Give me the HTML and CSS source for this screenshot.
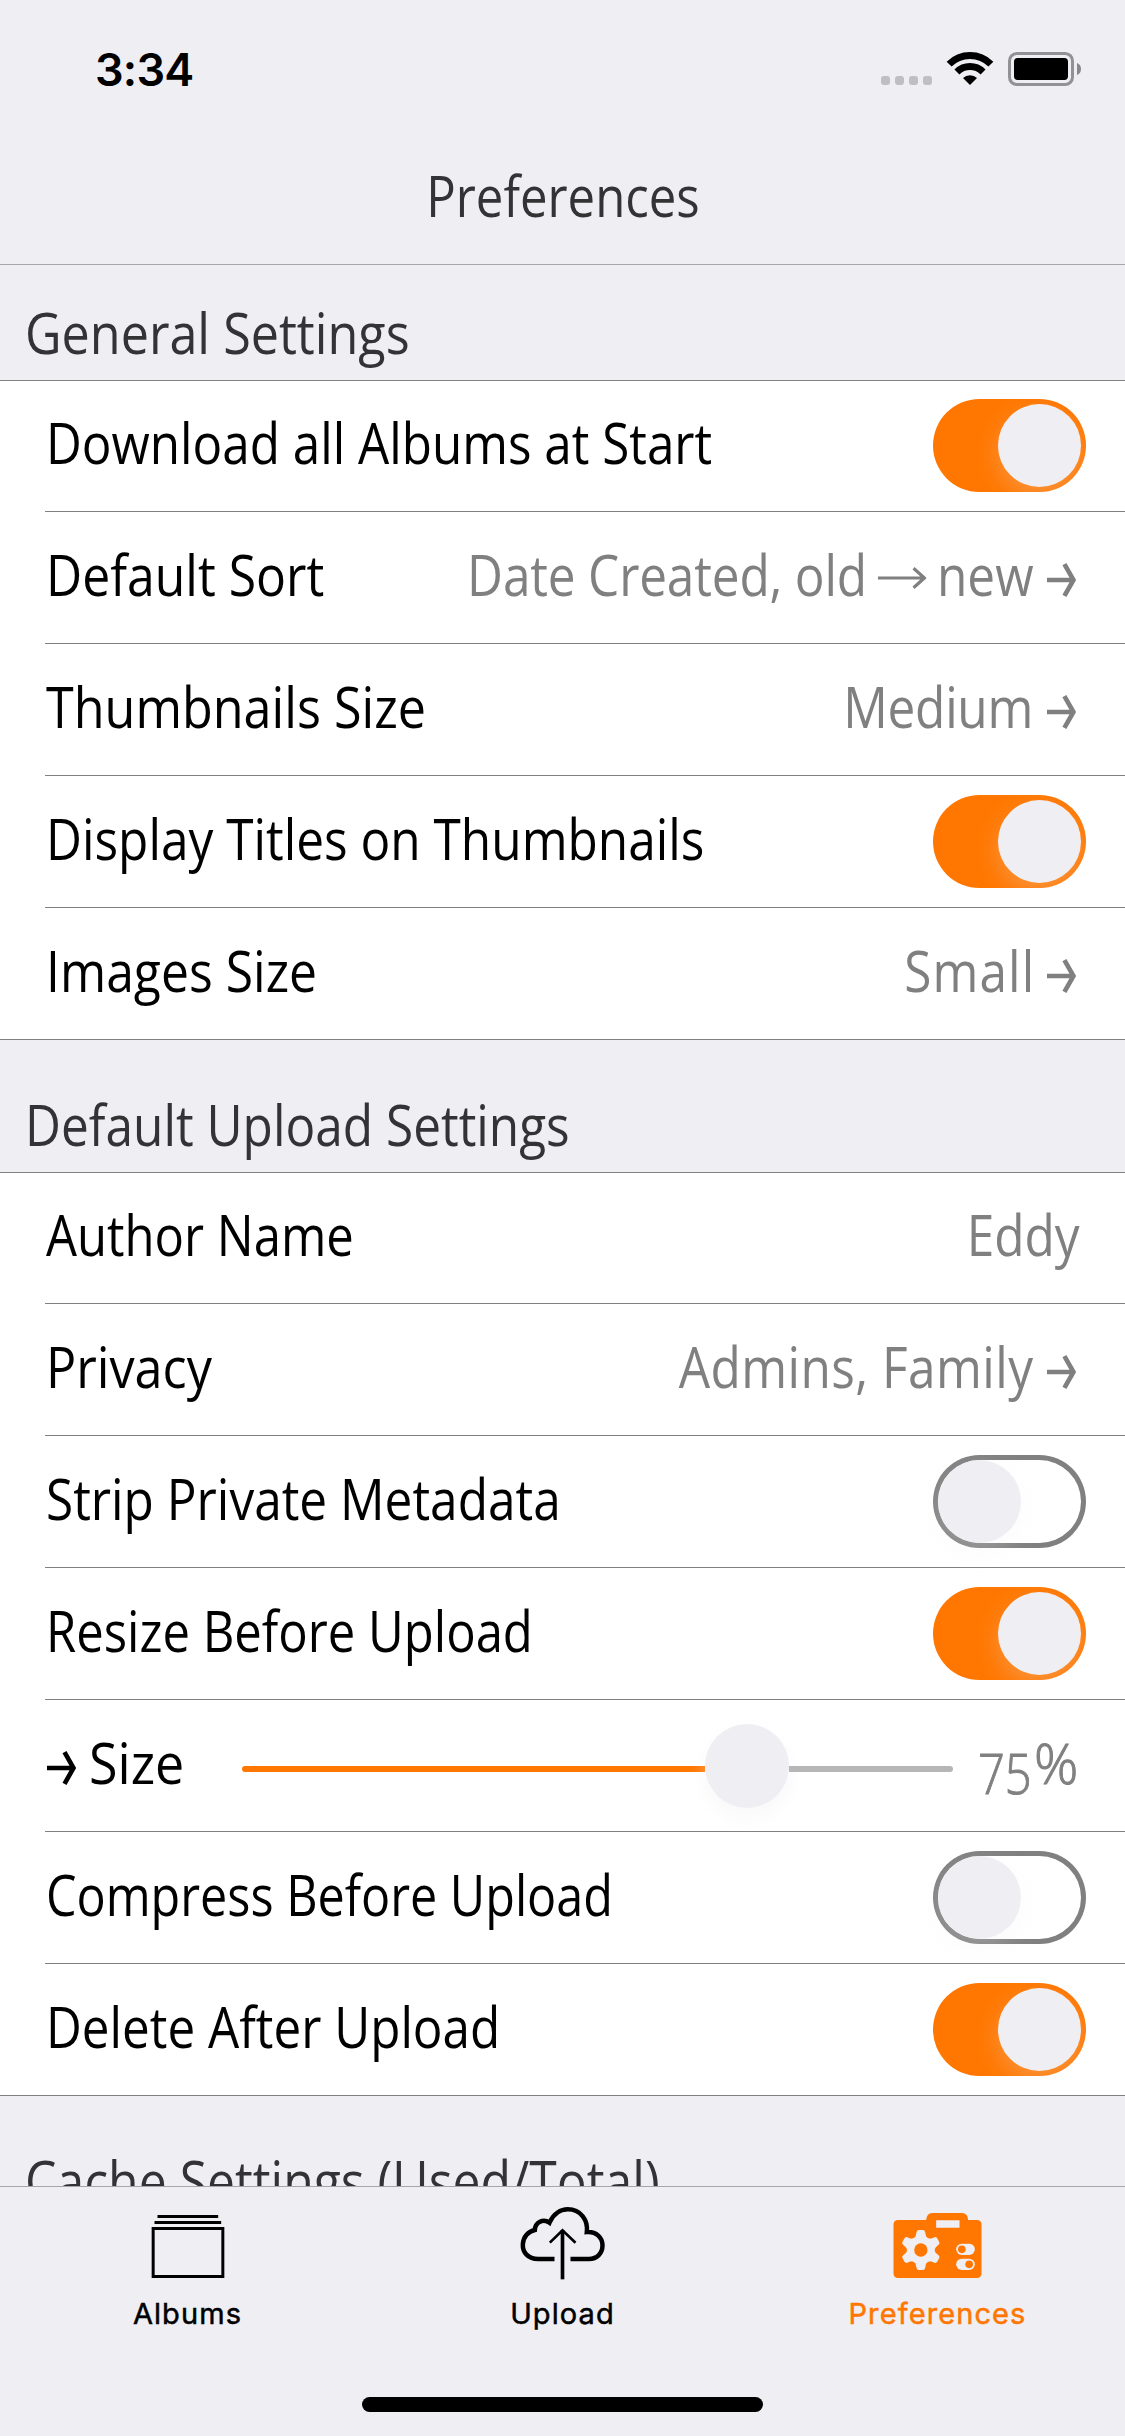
FILE: index.html
```
<!DOCTYPE html>
<html lang="en">
<head>
<meta charset="utf-8">
<title>Preferences</title>
<link rel="stylesheet" href="styles.css">
</head>
<body>
<svg class="defs" aria-hidden="true">
  <symbol id="arrow" viewBox="0 0 29 34" preserveAspectRatio="none"><path d="M0 17H25M17.5 1.2L26.5 17L17.5 32.8" fill="none" stroke="currentColor" stroke-width="4.6"/></symbol>
</svg>
<header class="top">
  <div class="status">
    <span class="time">3:34</span>
    <svg class="indicators" viewBox="60 60 606 120">
      <g fill="#bfbfc2"><rect x="63" y="138" width="27" height="27" rx="9"/><rect x="105" y="138" width="27" height="27" rx="9"/><rect x="147" y="138" width="27" height="27" rx="9"/><rect x="189" y="138" width="27" height="27" rx="9"/></g>
      <path d="M267.4 102.4A88.5 88.5 0 0 1 392.6 102.4M290.8 125.8A55.5 55.5 0 0 1 369.2 125.8" fill="none" stroke="#000" stroke-width="21"/>
      <path d="M309 144A30 30 0 0 1 351 144L330 165Z"/>
      <rect x="448.500" y="70.500" width="189" height="93" rx="22" fill="none" stroke="#929295" stroke-width="9"/>
      <rect x="462" y="84" width="162" height="66" rx="11"/>
      <path d="M651 99Q663 104 663 117T651 135Z" fill="#88888a"/>
    </svg>
  </div>
  <div class="nav"><h1 class="txt center">Preferences</h1></div>
</header>

<main class="list">
  <h2 class="section first"><span class="txt w90">General Settings</span></h2>
  <div class="rows">
    <div class="row"><span class="txt">Download all Albums at Start</span><i class="toggle on"></i></div>
    <div class="row"><span class="txt w89">Default Sort</span><span class="value">
      <span class="snug">Date Created, old</span><svg class="long" viewBox="0 0 49 22" preserveAspectRatio="none"><path d="M0 11H47M36 1.200L47 11L36 20.800" fill="none" stroke="currentColor" stroke-width="3.200"/></svg><span>new</span><svg class="arrow"><use href="#arrow"/></svg></span></div>
    <div class="row"><span class="txt w90">Thumbnails Size</span><span class="value"><span class="medium">Medium</span><svg class="arrow"><use href="#arrow"/></svg></span></div>
    <div class="row"><span class="txt w88">Display Titles on Thumbnails</span><i class="toggle on"></i></div>
    <div class="row"><span class="txt w89">Images Size</span><span class="value"><span class="wide">Small</span><svg class="arrow"><use href="#arrow"/></svg></span></div>
  </div>

  <h2 class="section"><span class="txt w88">Default Upload Settings</span></h2>
  <div class="rows">
    <div class="row"><span class="txt w87">Author Name</span><span class="value flush">Eddy</span></div>
    <div class="row"><span class="txt w90">Privacy</span><span class="value"><span class="roomy">Admins, Family</span><svg class="arrow"><use href="#arrow"/></svg></span></div>
    <div class="row"><span class="txt w88">Strip Private Metadata</span><i class="toggle"></i></div>
    <div class="row"><span class="txt w87">Resize Before Upload</span><i class="toggle on"></i></div>
    <div class="row size">
      <svg class="arrow plain"><use href="#arrow"/></svg><span class="txt size-label">Size</span>
      <div class="slider"><div class="fill"></div><div class="thumb"></div><div class="rest"></div></div>
      <span class="percent"><span class="digits">75</span><span class="sign">%</span></span>
    </div>
    <div class="row"><span class="txt w86">Compress Before Upload</span><i class="toggle"></i></div>
    <div class="row"><span class="txt">Delete After Upload</span><i class="toggle on"></i></div>
  </div>

  <h2 class="section"><span class="txt w89">Cache Settings (Used/Total)</span></h2>
</main>

<footer class="bottom">
  <nav class="tabs">
    <a class="tab">
      <svg viewBox="67.500 30 270 240"><path d="M111 79.500H293M102 97.500H302" stroke="#000" stroke-width="9"/><rect x="98" y="115.500" width="209" height="144" fill="none" stroke="#000" stroke-width="9"/></svg>
      <span>Albums</span>
    </a>
    <a class="tab">
      <svg viewBox="52.500 30 270 240"><g fill="none" stroke="#000"><path d="M162 207H113C82 207 66 187 67 163C68 140 84 124 103 120C104 97 128 84 147 98C159 70 181 58 202 58C240 58 263 90 259 126C288 124 306 143 306 166C306 190 290 207 265 207H210" stroke-width="13.500"/><path d="M186 120V268" stroke-width="11"/><path d="M148 158L186 121L225 158" stroke-width="8"/></g></svg>
      <span>Upload</span>
    </a>
    <a class="tab active">
      <svg viewBox="157.500 30 270 240">
        <path fill="#ff7700" fill-rule="evenodd" d="M173 90H257Q259 69 275 69H365Q381 69 383 90H409Q423 90 423 104V250Q423 264 409 264H173Q159 264 159 250V104Q159 90 173 90ZM287 91V113H357V91Z"/>
        <g transform="translate(241 180)" fill="#efeef3">
          <circle r="42"/>
          <path id="tooth" d="M-20 -34Q-14 -42 -13 -53Q-12 -60 -6 -60H6Q12 -60 13 -53Q14 -42 20 -34V34Q14 42 13 53Q12 60 6 60H-6Q-12 60 -13 53Q-14 42 -20 34Z"/>
          <use href="#tooth" transform="rotate(60)"/><use href="#tooth" transform="rotate(-60)"/>
          <circle r="20" fill="#ff7700"/>
        </g>
        <rect x="347" y="161" width="56" height="34" rx="17" fill="#efeef3"/><rect x="347" y="206" width="56" height="34" rx="17" fill="#efeef3"/>
        <circle cx="364" cy="178" r="11.500" fill="#ff7700"/><circle cx="386" cy="223" r="11.500" fill="#ff7700"/>
      </svg>
      <span>Preferences</span>
    </a>
  </nav>
  <div class="home"></div>
</footer>
</body>
</html>
```
FILE: styles.css
```
* { box-sizing: border-box; }
body {
  margin: 0;
  width: 1125px;
  height: 2436px;
  display: flex;
  flex-direction: column;
  overflow: hidden;
  background: #efeef3;
  font: 400 56px/76px "Open Sans", "Noto Sans", sans-serif;
  color: #000;
}
h1, h2 { margin: 0; font: inherit; color: #333336; }
.defs { display: none; }

/* Labels use a slightly narrowed face */
.txt { display: block; white-space: nowrap; transform: scaleX(.882); transform-origin: 0 50%; }
.w86 { transform: scaleX(.866); }
.w87 { transform: scaleX(.875); }
.w88 { transform: scaleX(.885); }
.w89 { transform: scaleX(.891); }
.w90 { transform: scaleX(.898); }
.center { transform: scaleX(.877); transform-origin: 50% 50%; }

.top { flex: none; height: 265px; border-bottom: 1px solid #a6a6aa; }
.status { height: 132px; padding: 0 45px 0 95px; display: flex; justify-content: space-between; align-items: flex-start; }
.time { font: 600 45px/54px Inter, sans-serif; letter-spacing: -.8px; margin-top: 43px; }
.indicators { width: 202px; height: 40px; margin: 50px -2px 0 0; }
.nav { height: 132px; padding: 0 0 7px 1px; display: flex; justify-content: center; align-items: center; }

.list { flex: none; height: 1921px; overflow: hidden; }
.section { height: 133px; padding: 0 0 10px 25px; display: flex; align-items: flex-end; border-bottom: 1px solid #808080; }
.section.first { height: 116px; }
.rows { background: #fff; border-bottom: 1px solid #808080; padding-left: 45px; }
.row {
  height: 132px;
  padding: 0 49px 7px 1px;
  display: flex;
  align-items: center;
  justify-content: space-between;
  border-bottom: 1px solid #808080;
}
.row:first-child { height: 131px; padding-bottom: 8px; }
.row:last-child { height: 131px; border-bottom: 0; }

.value {
  display: flex;
  align-items: center;
  white-space: nowrap;
  color: #808080;
  transform: scaleX(.885);
  transform-origin: 100% 50%;
}
.flush { margin-right: -4px; }
.arrow { width: 33px; height: 34px; margin: 12px 0 0 15px; flex: none; }
.long { width: 55px; height: 22px; margin: 7px 12px 0 12px; flex: none; }
.medium { letter-spacing: -.3px; }
.wide { letter-spacing: 1.200px; margin-right: -2px; }
.roomy { letter-spacing: .5px; }
.snug { letter-spacing: -.2px; }

.toggle {
  width: 153px;
  height: 93px;
  margin: 7px -10px 0 0;
  padding: 5px;
  border-radius: 47px;
  box-shadow: inset 0 0 0 5px #808080;
  display: flex;
}
.toggle::before {
  content: "";
  width: 83px;
  height: 83px;
  border-radius: 50%;
  background: #efeef3;
  box-shadow: 0 9px 24px rgba(239, 238, 243, .25);
}
.toggle.on { background: #ff7700; box-shadow: none; justify-content: flex-end; overflow: hidden; }

.size { justify-content: flex-start; }
.arrow.plain { width: 29px; margin: 12px 0 0 1px; }
.size-label { width: 103px; margin-left: 13px; flex: none; transform: scaleX(.93); }
.slider { width: 711px; height: 84px; margin: 8px 0 0 50px; display: flex; align-items: center; flex: none; }
.fill { width: 463px; height: 6px; margin-top: 6px; background: #ff7700; border-radius: 3px 0 0 3px; }
.thumb { width: 84px; height: 84px; border-radius: 50%; background: #efeef3; box-shadow: 0 9px 18px rgba(239, 238, 243, .4); }
.rest { flex: 1; height: 6px; margin-top: 6px; background: #b6b6b6; border-radius: 0 3px 3px 0; }
.percent { display: flex; color: #808080; margin-left: 25px; font-weight: 300; -webkit-text-stroke: 1px #808080; }
.digits { padding-top: 10px; margin-bottom: -10px; width: 56px; transform: scaleX(.84); transform-origin: 0 50%; }
.sign { transform: scaleX(.98); transform-origin: 0 50%; }

.bottom { flex: 1; border-top: 1px solid #a6a6aa; display: flex; flex-direction: column; align-items: center; }
.tabs { width: 100%; display: grid; grid-template-columns: repeat(3, 1fr); }
.tab { display: flex; flex-direction: column; align-items: center; padding-top: 13px; font: 400 29px/36px Inter, sans-serif; letter-spacing: 1.1px; -webkit-text-stroke: .5px currentColor; }
.tab svg { width: 90px; height: 80px; }
.tab span { margin-top: 16px; }
.active { color: #ff7700; }
.home { width: 401px; height: 15px; border-radius: 8px; background: #000; margin-top: 65px; }
```
